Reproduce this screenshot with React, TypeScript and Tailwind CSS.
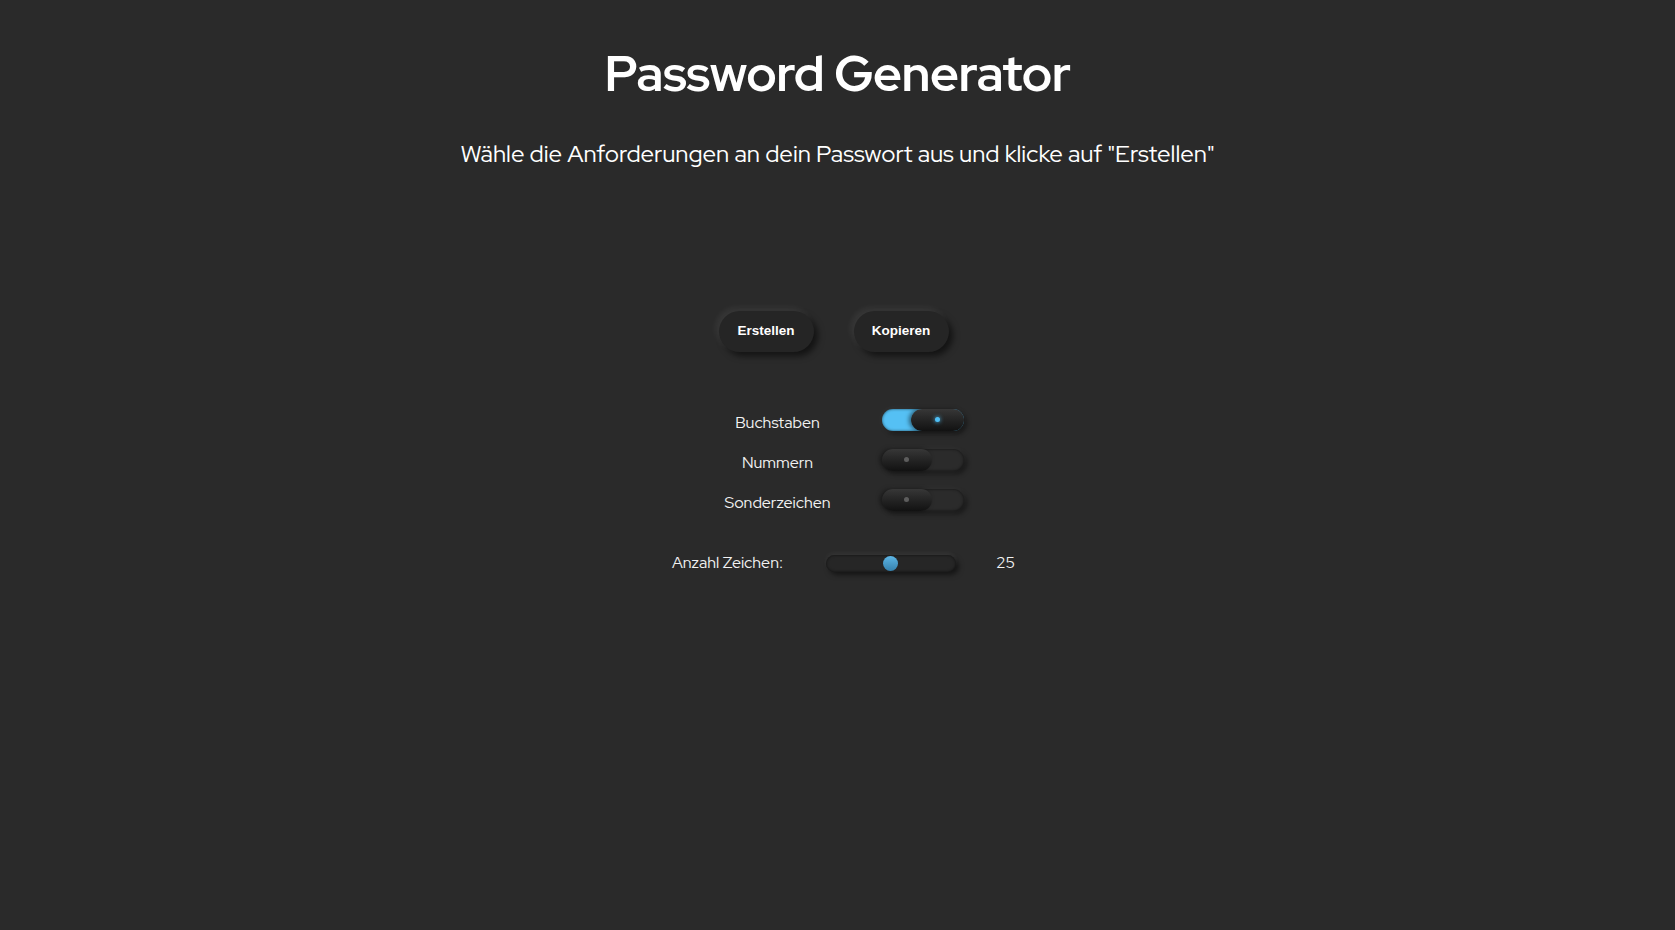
import { useState } from "react";

const rounded = "'Red Hat Display', Lato, 'Noto Sans', sans-serif";

function Toggle({ on, onClick }: { on: boolean; onClick: () => void }) {
  return (
    <button
      onClick={onClick}
      className={`relative h-[22px] w-[82px] rounded-full shadow-[0_0_6px_rgba(255,255,255,0.06),3px_3px_5px_rgba(0,0,0,0.45),inset_0_0_3px_rgba(0,0,0,0.6)] ${
        on ? "bg-[#55c0f4]" : "bg-[#2b2b2b]"
      }`}
    >
      <span
        className={`absolute top-0 flex h-[22px] items-center justify-center rounded-full bg-gradient-to-b from-[#373737] to-[#121212] shadow-[-2px_0_4px_rgba(0,0,0,0.5)] ${
          on ? "left-[29px] w-[53px]" : "left-0 w-[50px]"
        }`}
      >
        <span
          className={`block h-[5px] w-[5px] rounded-full ${
            on ? "bg-[#4fc0f6] shadow-[0_0_4px_#4fc0f6]" : "bg-[#5d5d5d]"
          }`}
        />
      </span>
    </button>
  );
}

export default function App() {
  const [opts, setOpts] = useState({ letters: true, numbers: false, special: false });
  const rows: { key: keyof typeof opts; label: string }[] = [
    { key: "letters", label: "Buchstaben" },
    { key: "numbers", label: "Nummern" },
    { key: "special", label: "Sonderzeichen" },
  ];

  return (
    <div className="flex min-h-[930px] flex-col items-center bg-[#2a2a2a] text-white">
      <h1
        className="mt-[43px] text-[50px] font-bold leading-[60px] tracking-[-0.5px]"
        style={{ fontFamily: rounded }}
      >
        Password Generator
      </h1>
      <p className="mt-[36px] text-[24px] leading-[30px]" style={{ fontFamily: rounded }}>
        Wähle die Anforderungen an dein Passwort aus und klicke auf "Erstellen"
      </p>

      <div className="mt-[142px] mr-[8px] flex gap-[40px]">
        {["Erstellen", "Kopieren"].map((t) => (
          <button
            key={t}
            className="h-[41px] w-[95px] rounded-full bg-[#252525] text-[13.5px] font-bold text-white shadow-[-3px_-3px_6px_rgba(255,255,255,0.07),4px_4px_6px_rgba(0,0,0,0.55)]"
            style={{ fontFamily: "'Liberation Sans', Arial, sans-serif" }}
          >
            {t}
          </button>
        ))}
      </div>

      <div className="mt-[60px] flex flex-col gap-[18px]" style={{ fontFamily: rounded }}>
        {rows.map((r) => (
          <div key={r.key} className="flex h-[22px] w-[254px] items-center">
            <span className="ml-[2px] w-[130px] text-center text-[16px] text-[#f2f2f2]">{r.label}</span>
            <span className="ml-[39px]">
              <Toggle on={opts[r.key]} onClick={() => setOpts({ ...opts, [r.key]: !opts[r.key] })} />
            </span>
          </div>
        ))}
      </div>

      <div className="mt-[37px] flex items-center pl-[12px]" style={{ fontFamily: rounded }}>
        <span className="w-[110px] whitespace-nowrap text-[16px] text-[#f2f2f2]">Anzahl Zeichen:</span>
        <div className="relative ml-[44px] h-[17px] w-[130px] rounded-full bg-[#262626] shadow-[0_-2px_4px_rgba(255,255,255,0.06),3px_3px_5px_rgba(0,0,0,0.5),inset_0_0_3px_rgba(0,0,0,0.6)]">
          <span className="absolute left-[57px] top-[1px] block h-[15px] w-[15px] rounded-full bg-gradient-to-b from-[#5db6e6] to-[#3581ad]" />
        </div>
        <span className="ml-[40px] text-[16px] text-[#f2f2f2]">25</span>
      </div>
    </div>
  );
}
